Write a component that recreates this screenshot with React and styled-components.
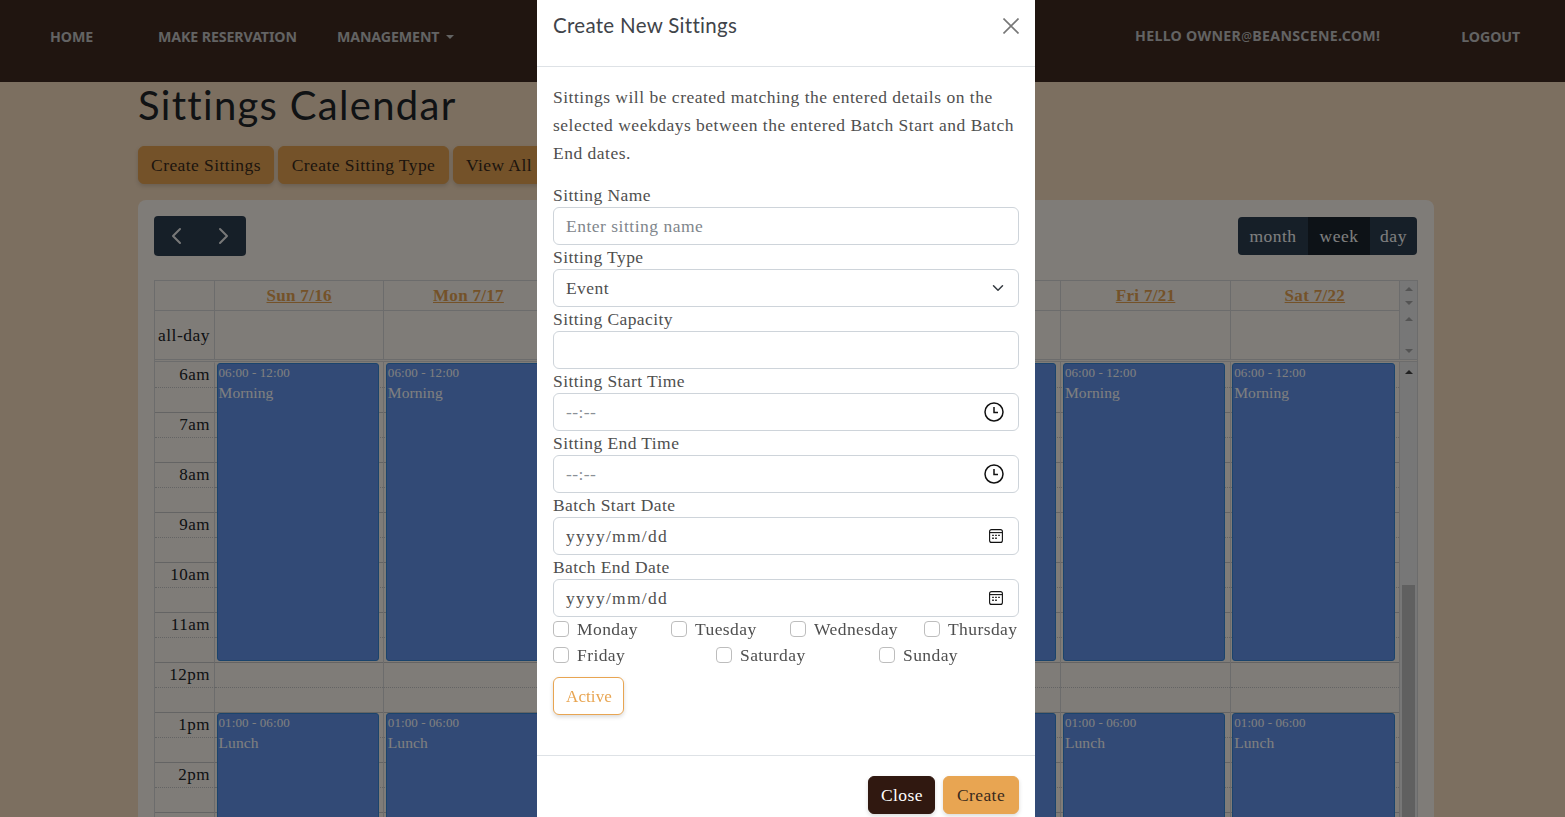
import React from "react";
import styled, { createGlobalStyle } from "styled-components";

const SERIF = `"Liberation Serif", "Times New Roman", serif`;
const HEAD = `Lato, "Noto Sans", sans-serif`;

const Global = createGlobalStyle`
  html, body { margin: 0; height: 100%; overflow: hidden; }
  body { font-family: ${SERIF}; font-size: 17.5px; letter-spacing: 0.5px; color: #212529; }
  * { box-sizing: border-box; }
`;

const Page = styled.div`
  height: 817px;
  overflow: hidden;
  background: #f8dec0;
`;
const Nav = styled.nav`
  height: 82px;
  background: #402b21;
  display: flex;
  align-items: center;
  padding: 0 45px 10px 50px;
  font-family: "Noto Sans", sans-serif;
  font-weight: 700;
  font-size: 14.2px;
  letter-spacing: -0.1px;
  text-transform: uppercase;
  color: #c6c6c6;
`;
const NavLink = styled.span`
  margin-right: ${(p) => p.$gap || 0}px;
  position: relative;
  top: ${(p) => p.$lift || 0}px;
  letter-spacing: ${(p) => p.$ls || "inherit"};
`;
const Caret = styled.i`
  display: inline-block;
  margin-left: 7px;
  vertical-align: 3px;
  border-top: 4px solid #c6c6c6;
  border-left: 4px solid transparent;
  border-right: 4px solid transparent;
`;
const NavSpacer = styled.div`flex: 1;`;
const Small = styled.span`font-weight: 400; font-size: 12px;`;

const Main = styled.main`
  margin-left: 138px;
  width: 1296px;
`;
const Title = styled.h1`
  margin: 0;
  height: 64px;
  font-family: ${HEAD};
  font-weight: 400;
  font-size: 40px;
  letter-spacing: 1.3px;
  line-height: 47px;
`;
const ActionRow = styled.div`
  display: flex;
  gap: 4px;
  margin-bottom: 16px;
`;
const Button = styled.button`
  height: 38px;
  padding: 0 12px;
  width: ${(p) => p.$w}px;
  border: 1px solid ${(p) => (p.$dark ? "#301810" : "#e8a552")};
  border-radius: 6px;
  background: ${(p) => (p.$outline ? "#fff" : p.$dark ? "#301810" : "#e8a552")};
  color: ${(p) => (p.$outline ? "#e8a552" : p.$dark ? "#fff" : "#3a2a1c")};
  font: inherit;
  letter-spacing: 0.42px;
  white-space: nowrap;
  overflow: hidden;
  box-shadow: 0 2px 4px rgba(0, 0, 0, 0.15);
`;
const ActiveButton = styled(Button)`
  font-size: 17px;
  letter-spacing: 0.1px;
  padding-top: 1px;
`;
const Card = styled.section`
  background: #fff8f0;
  border-radius: 8px;
  padding: 16px;
  height: 700px;
`;
const Toolbar = styled.div`
  display: flex;
  justify-content: space-between;
  align-items: center;
  height: 40px;
  margin-bottom: 24px;
`;
const ArrowGroup = styled.div`
  display: flex;
  height: 40px;
  background: #2c3e50;
  border-radius: 4px;
  overflow: hidden;
`;
const ArrowBtn = styled.div`
  width: 46px;
  display: flex;
  align-items: center;
  justify-content: center;
  color: #f0f0f0;
`;
const ViewGroup = styled.div`
  display: flex;
  height: 38px;
  margin-right: 1px;
  border-radius: 4px;
  overflow: hidden;
  background: #2c3e50;
  color: #fff;
`;
const ViewBtn = styled.div`
  width: ${(p) => p.$w}px;
  display: flex;
  align-items: center;
  justify-content: center;
  background: ${(p) => (p.$active ? "#1a252f" : "transparent")};
`;
const Table = styled.div`
  width: 1264px;
  border: 1px solid #d8d8d8;
`;
const Row = styled.div`
  display: grid;
  grid-template-columns: 60px repeat(7, 1fr) 17px;
  height: ${(p) => p.$h}px;
  border-bottom: ${(p) => (p.$thick ? "3px double #d8d8d8" : "1px solid #d8d8d8")};
`;
const Cell = styled.div`
  border-right: 1px solid #d8d8d8;
  display: flex;
  align-items: center;
  justify-content: ${(p) => (p.$end ? "flex-end" : "center")};
  padding-right: ${(p) => (p.$end ? 4 : 0)}px;
`;
const DayLink = styled.a`
  color: #e8a552;
  font-weight: 700;
  text-decoration: underline;
  font-size: 17px;
  letter-spacing: 0.3px;
`;
const Gutter = styled.div`
  background: #eeeeee;
  margin-bottom: ${(p) => (p.$pull ? -1 : 0)}px;
  display: flex;
  flex-direction: column;
  align-items: center;
  justify-content: space-between;
  padding: ${(p) => p.$pad || 5}px 0;
`;
const Tri = styled.i`
  width: 0;
  height: 0;
  border-left: 4px solid transparent;
  border-right: 4px solid transparent;
  ${(p) => (p.$down ? "border-top" : "border-bottom")}: 4px solid ${(p) => p.$c || "#a8a8a8"};
`;
const TimeGrid = styled.div`
  display: grid;
  grid-template-columns: 60px repeat(7, 1fr) 17px;
  height: 455px;
  overflow: hidden;
`;
const DayCol = styled.div`
  display: grid;
  grid-template-rows: repeat(20, 25px);
  border-right: ${(p) => (p.$axis ? "none" : "1px solid #d8d8d8")};
`;
const Slot = styled.div`
  grid-column: 1;
  grid-row: ${(p) => p.$i + 1};
  border-top: 1px ${(p) => (p.$i % 2 ? "dotted" : "solid")} ${(p) => (p.$i === 0 ? "transparent" : "#c8c8c8")};
`;
const AxisSlot = styled(Slot)`
  border-right: ${(p) => (p.$i % 2 ? "none" : "1px solid #d8d8d8")};
  text-align: right;
  padding-right: 4px;
  line-height: 23px;
  font-size: 17px;
  box-shadow: ${(p) => (p.$i % 2 ? "inset -1px 0 0 #d8d8d8" : "none")};
`;
const Event = styled.div`
  grid-column: 1;
  grid-row: ${(p) => p.$start} / span 12;
  z-index: 1;
  margin: 1px 4.5px 1px 1.5px;
  padding: 0 1px 1px;
  background: #6495ed;
  border: 1px solid #3788d8;
  border-radius: 3px;
  color: #fff;
  overflow: hidden;
`;
const EventTime = styled.div`
  font-size: 13px;
  line-height: 18px;
  letter-spacing: 0.1px;
`;
const EventName = styled.div`
  font-size: 15.5px;
  line-height: 22px;
  letter-spacing: 0.1px;
`;
const ScrollTrack = styled.div`
  background: #eeeeee;
  display: flex;
  flex-direction: column;
  align-items: center;
  padding-top: 8px;
`;
const Thumb = styled.div`
  width: 13px;
  height: 300px;
  margin-top: 211px;
  background: #c0c0c0;
`;

const Overlay = styled.div`
  position: fixed;
  inset: 0;
  background: rgba(0, 0, 0, 0.5);
  z-index: 5;
`;
const ModalWrap = styled.div`
  position: fixed;
  inset: 0;
  z-index: 6;
  display: flex;
  justify-content: center;
  padding-left: 7px;
  align-items: flex-start;
  overflow: hidden;
`;
const Modal = styled.div`
  width: 498px;
  background: #fff;
  color: #4f4f4f;
`;
const ModalHeader = styled.header`
  height: 67px;
  border-bottom: 1px solid #dee2e6;
  padding: 0 16px;
  display: flex;
  justify-content: space-between;
  align-items: flex-start;
`;
const ModalTitle = styled.h5`
  margin: 0;
  font-family: ${HEAD};
  font-weight: 400;
  font-size: 20.5px;
  letter-spacing: 0.3px;
  line-height: 51px;
  color: #3f444a;
`;
const CloseIcon = styled.svg`
  margin-top: 18px;
  width: 16px;
  height: 16px;
  color: #777;
`;
const ModalBody = styled.div`
  padding: 16px 16px 40px;
`;
const Lead = styled.p`
  margin: 0 0 16px;
  line-height: 28px;
`;
const Label = styled.label`
  display: block;
  height: 24px;
  line-height: 25px;
  letter-spacing: 0.42px;
`;
const Field = styled.div`
  height: 38px;
  border: 1px solid #ced4da;
  border-radius: 6px;
  background: #fff;
  padding: 0 12px;
  display: flex;
  align-items: center;
  justify-content: space-between;
  color: ${(p) => (p.$muted ? "#8a9096" : "#4f4f4f")};
  letter-spacing: ${(p) => p.$ls || "0.42px"};
`;
const TextInput = styled.input`
  display: block;
  width: 100%;
  height: 38px;
  border: 1px solid #ced4da;
  border-radius: 6px;
  padding: 0 12px;
  font: inherit;
  letter-spacing: 0.5px;
  outline: none;
  &::placeholder { color: #7f868c; opacity: 1; }
`;
const IconSlot = styled.svg`
  flex: none;
  margin-right: ${(p) => p.$mr || 0}px;
`;
const DaysGrid = styled.div`
  display: grid;
  grid-template-columns: ${(p) => p.$cols};
  height: 26px;
  margin-bottom: ${(p) => p.$mb || 0}px;
`;
const Check = styled.label`
  display: flex;
  align-items: center;
  gap: 8px;
  line-height: 24px;
  padding-bottom: 2px;
  white-space: nowrap;
  letter-spacing: 0.42px;
`;
const Box = styled.i`
  width: 16px;
  height: 16px;
  border: 1px solid #bdbdbd;
  border-radius: 4px;
  background: #fff;
`;
const ModalFooter = styled.footer`
  border-top: 1px solid #dee2e6;
  padding: 20px 16px;
  display: flex;
  justify-content: flex-end;
  gap: 8px;
`;

const Clock = () => (
  <IconSlot $mr={2} width="20" height="20" viewBox="0 0 20 20" fill="none" stroke="#111" strokeWidth="1.5">
    <circle cx="10" cy="10" r="9" />
    <path d="M10 5v5.500h4" />
  </IconSlot>
);
const CalIcon = () => (
  <IconSlot $mr={3} width="14" height="14" viewBox="0 0 14 14" fill="none" stroke="#111" strokeWidth="1.1">
    <rect x="0.6" y="0.6" width="12.8" height="12.8" rx="2" />
    <path d="M.6 3.600h12.8" />
    <path d="M3.200 6.400h1.600M6.200 6.400h1.600M9.200 6.400h1.600M3.200 9.200h1.600M6.200 9.200h1.600" strokeWidth="1.4" />
  </IconSlot>
);
const Chevron = ({ d }) => (
  <svg width="20" height="20" viewBox="0 0 20 20" fill="none" stroke="currentColor" strokeWidth="2" strokeLinecap="round" strokeLinejoin="round">
    <path d={d} />
  </svg>
);

const days = ["Sun 7/16", "Mon 7/17", "Tue 7/18", "Wed 7/19", "Thu 7/20", "Fri 7/21", "Sat 7/22"];
const hours = ["6am", "7am", "8am", "9am", "10am", "11am", "12pm", "1pm", "2pm", "3pm"];
const slots = Array.from({ length: 20 }, (_, i) => i);

const fields = [
  { label: "Sitting Start Time", text: "--:--", muted: true, icon: <Clock /> },
  { label: "Sitting End Time", text: "--:--", muted: true, icon: <Clock /> },
  { label: "Batch Start Date", text: "yyyy/mm/dd", icon: <CalIcon />, ls: "1.25px" },
  { label: "Batch End Date", text: "yyyy/mm/dd", icon: <CalIcon />, ls: "1.25px" },
];

export default function App() {
  return (
    <>
      <Global />
      <Page>
        <Nav>
          <NavLink $gap={65}>Home</NavLink>
          <NavLink $gap={40}>Make Reservation</NavLink>
          <NavLink>
            Management<Caret />
          </NavLink>
          <NavSpacer />
          <NavLink $gap={81} $lift={-1} $ls="0.3px">
            Hello owner<Small>@</Small>beanscene.com!
          </NavLink>
          <NavLink>Logout</NavLink>
        </Nav>
        <Main>
          <Title>Sittings Calendar</Title>
          <ActionRow>
            <Button $w={136}>Create Sittings</Button>
            <Button $w={171}>Create Sitting Type</Button>
            <Button $w={192}>View All Reservations</Button>
          </ActionRow>
          <Card>
            <Toolbar>
              <ArrowGroup>
                <ArrowBtn><Chevron d="M13 3 6 10l7 7" /></ArrowBtn>
                <ArrowBtn><Chevron d="m7 3 7 7-7 7" /></ArrowBtn>
              </ArrowGroup>
              <ViewGroup>
                <ViewBtn $w={70}>month</ViewBtn>
                <ViewBtn $w={62} $active>week</ViewBtn>
                <ViewBtn $w={47}>day</ViewBtn>
              </ViewGroup>
            </Toolbar>
            <Table>
              <Row $h={30}>
                <Cell />
                {days.map((d) => (
                  <Cell key={d}><DayLink>{d}</DayLink></Cell>
                ))}
                <Gutter $pull $pad={6}><Tri /><Tri $down /></Gutter>
              </Row>
              <Row $h={51} $thick>
                <Cell $end>all-day</Cell>
                {days.map((d) => <Cell key={d} />)}
                <Gutter $pad={6}><Tri /><Tri $down /></Gutter>
              </Row>
              <TimeGrid>
                <DayCol $axis>
                  {slots.map((i) => (
                    <AxisSlot key={i} $i={i}>{i % 2 ? "" : hours[i / 2]}</AxisSlot>
                  ))}
                </DayCol>
                {days.map((d) => (
                  <DayCol key={d}>
                    {slots.map((i) => <Slot key={i} $i={i} />)}
                    <Event $start={1}>
                      <EventTime>06:00 - 12:00</EventTime>
                      <EventName>Morning</EventName>
                    </Event>
                    <Event $start={15}>
                      <EventTime>01:00 - 06:00</EventTime>
                      <EventName>Lunch</EventName>
                    </Event>
                  </DayCol>
                ))}
                <ScrollTrack>
                  <Tri $c="#444" />
                  <Thumb />
                </ScrollTrack>
              </TimeGrid>
            </Table>
          </Card>
        </Main>
      </Page>
      <Overlay />
      <ModalWrap>
        <Modal>
          <ModalHeader>
            <ModalTitle>Create New Sittings</ModalTitle>
            <CloseIcon viewBox="0 0 16 16" fill="none" stroke="currentColor" strokeWidth="1.6">
              <path d="M.5.500l15 15M15.500.500l-15 15" />
            </CloseIcon>
          </ModalHeader>
          <ModalBody>
            <Lead>
              Sittings will be created matching the entered details on the selected weekdays between the entered Batch Start and Batch End dates.
            </Lead>
            <Label>Sitting Name</Label>
            <TextInput placeholder="Enter sitting name" />
            <Label>Sitting Type</Label>
            <Field>
              Event
              <IconSlot $mr={2} width="12" height="12" viewBox="0 0 16 16" fill="none" stroke="#343a40" strokeWidth="2" strokeLinecap="round" strokeLinejoin="round">
                <path d="m2 5 6 6 6-6" />
              </IconSlot>
            </Field>
            <Label>Sitting Capacity</Label>
            <TextInput />
            {fields.map((f) => (
              <React.Fragment key={f.label}>
                <Label>{f.label}</Label>
                <Field $muted={f.muted} $ls={f.ls}>
                  {f.text}
                  {f.icon}
                </Field>
              </React.Fragment>
            ))}
            <DaysGrid $cols="118px 119px 134px auto">
              {["Monday", "Tuesday", "Wednesday", "Thursday"].map((d) => (
                <Check key={d}><Box />{d}</Check>
              ))}
            </DaysGrid>
            <DaysGrid $cols="repeat(3, 163px)" $mb={8}>
              {["Friday", "Saturday", "Sunday"].map((d) => (
                <Check key={d}><Box />{d}</Check>
              ))}
            </DaysGrid>
            <ActiveButton $outline $w={71}>Active</ActiveButton>
          </ModalBody>
          <ModalFooter>
            <Button $dark $w={67}>Close</Button>
            <Button $w={76}>Create</Button>
          </ModalFooter>
        </Modal>
      </ModalWrap>
    </>
  );
}
